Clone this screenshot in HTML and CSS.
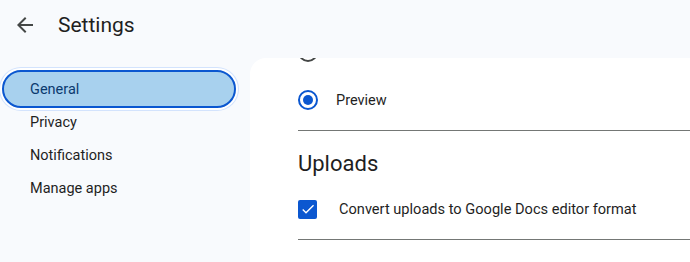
FILE: index.html
```html
<!DOCTYPE html>
<html lang="en">
<head>
  <meta charset="UTF-8" />
  <title>Settings</title>
  <link rel="stylesheet" href="styles.css">
</head>
<body>
  <div class="topbar">
    <svg class="back" width="24" height="24" viewBox="0 0 24 24"><path d="M20 11H7.83l5.59-5.59L12 4l-8 8 8 8 1.41-1.41L7.83 13H20v-2z"/></svg>
    <span class="title">Settings</span>
  </div>

  <div class="layout">
    <div class="sidebar">
      <div class="nav-item active">General</div>
      <div class="nav-item">Privacy</div>
      <div class="nav-item">Notifications</div>
      <div class="nav-item">Manage apps</div>
    </div>

    <div class="panel">
      <!-- previous option, scrolled mostly out of view -->
      <div class="option hidden-top">
        <span class="radio"></span>
      </div>
      <div class="option">
        <span class="radio checked"></span>
        <span class="label">Preview</span>
      </div>
      <div class="divider"></div>

      <h2 class="section-title">Uploads</h2>
      <div class="option">
        <span class="checkbox">
          <svg width="16" height="16" viewBox="0 0 24 24"><path d="M9 16.2 4.8 12l-1.4 1.4L9 19 21 7l-1.4-1.4L9 16.2z"/></svg>
        </span>
        <span class="label wide">Convert uploads to Google Docs editor format</span>
      </div>
      <div class="divider"></div>
    </div>
  </div>
</body>
</html>
```

FILE: styles.css
```css
body {
  margin: 0;
  background: #f8fafd;
  font-family: Roboto, "Noto Sans", sans-serif;
  color: #1f1f1f;
  width: 690px;
  height: 262px;
  overflow: hidden;
}
.topbar {
  height: 58px;
  display: flex;
  align-items: center;
  padding-left: 13px;
  box-sizing: border-box;
  padding-bottom: 8px;
}
.back {
  fill: #444746;
}
.title {
  font-size: 21px;
  margin-left: 21px;
  color: #1f1f1f;
}
.layout {
  display: grid;
  grid-template-columns: 250px 1fr;
}
.sidebar {
  padding-top: 14.5px;
}
.nav-item {
  height: 33px;
  display: flex;
  align-items: center;
  font-size: 14.5px;
  margin-left: 2px;
  width: 234px;
  box-sizing: border-box;
  padding-left: 28px;
}
.nav-item.active {
  height: 38px;
  margin-top: -2.5px;
  margin-bottom: -2.5px;
  border: 2px solid #0b57d0;
  border-radius: 19px;
  background: #a8d1ee;
  padding-left: 26px;
  color: #0b3a6e;
  box-shadow: 0 0 0 2px #fff, 0 0 0 3px #d3e3fd;
}
.panel {
  background: #fff;
  border-top-left-radius: 16px;
  padding-left: 48px;
  height: 204px;
  overflow: hidden;
}
.option {
  height: 48px;
  display: flex;
  align-items: center;
}
.hidden-top {
  margin-top: -30px;
}
.radio {
  width: 20px;
  height: 20px;
  box-sizing: border-box;
  border: 2px solid #444746;
  border-radius: 50%;
  display: flex;
  align-items: center;
  justify-content: center;
}
.radio.checked {
  border-color: #0b57d0;
}
.radio.checked::after {
  content: "";
  width: 10px;
  height: 10px;
  border-radius: 50%;
  background: #0b57d0;
}
.label {
  font-size: 14.5px;
  margin-left: 18px;
}
.label.wide {
  margin-left: 22px;
  font-size: 14.6px;
}
.checkbox {
  width: 19px;
  height: 19px;
  border-radius: 2px;
  background: #0b57d0;
  display: flex;
  align-items: center;
  justify-content: center;
}
.checkbox svg {
  fill: #fff;
}
.divider {
  height: 1px;
  background: #747775;
  margin-top: 6px;
}
.section-title {
  font-size: 22px;
  font-weight: 400;
  line-height: 28px;
  margin: 19px 0 7px;
}
```
